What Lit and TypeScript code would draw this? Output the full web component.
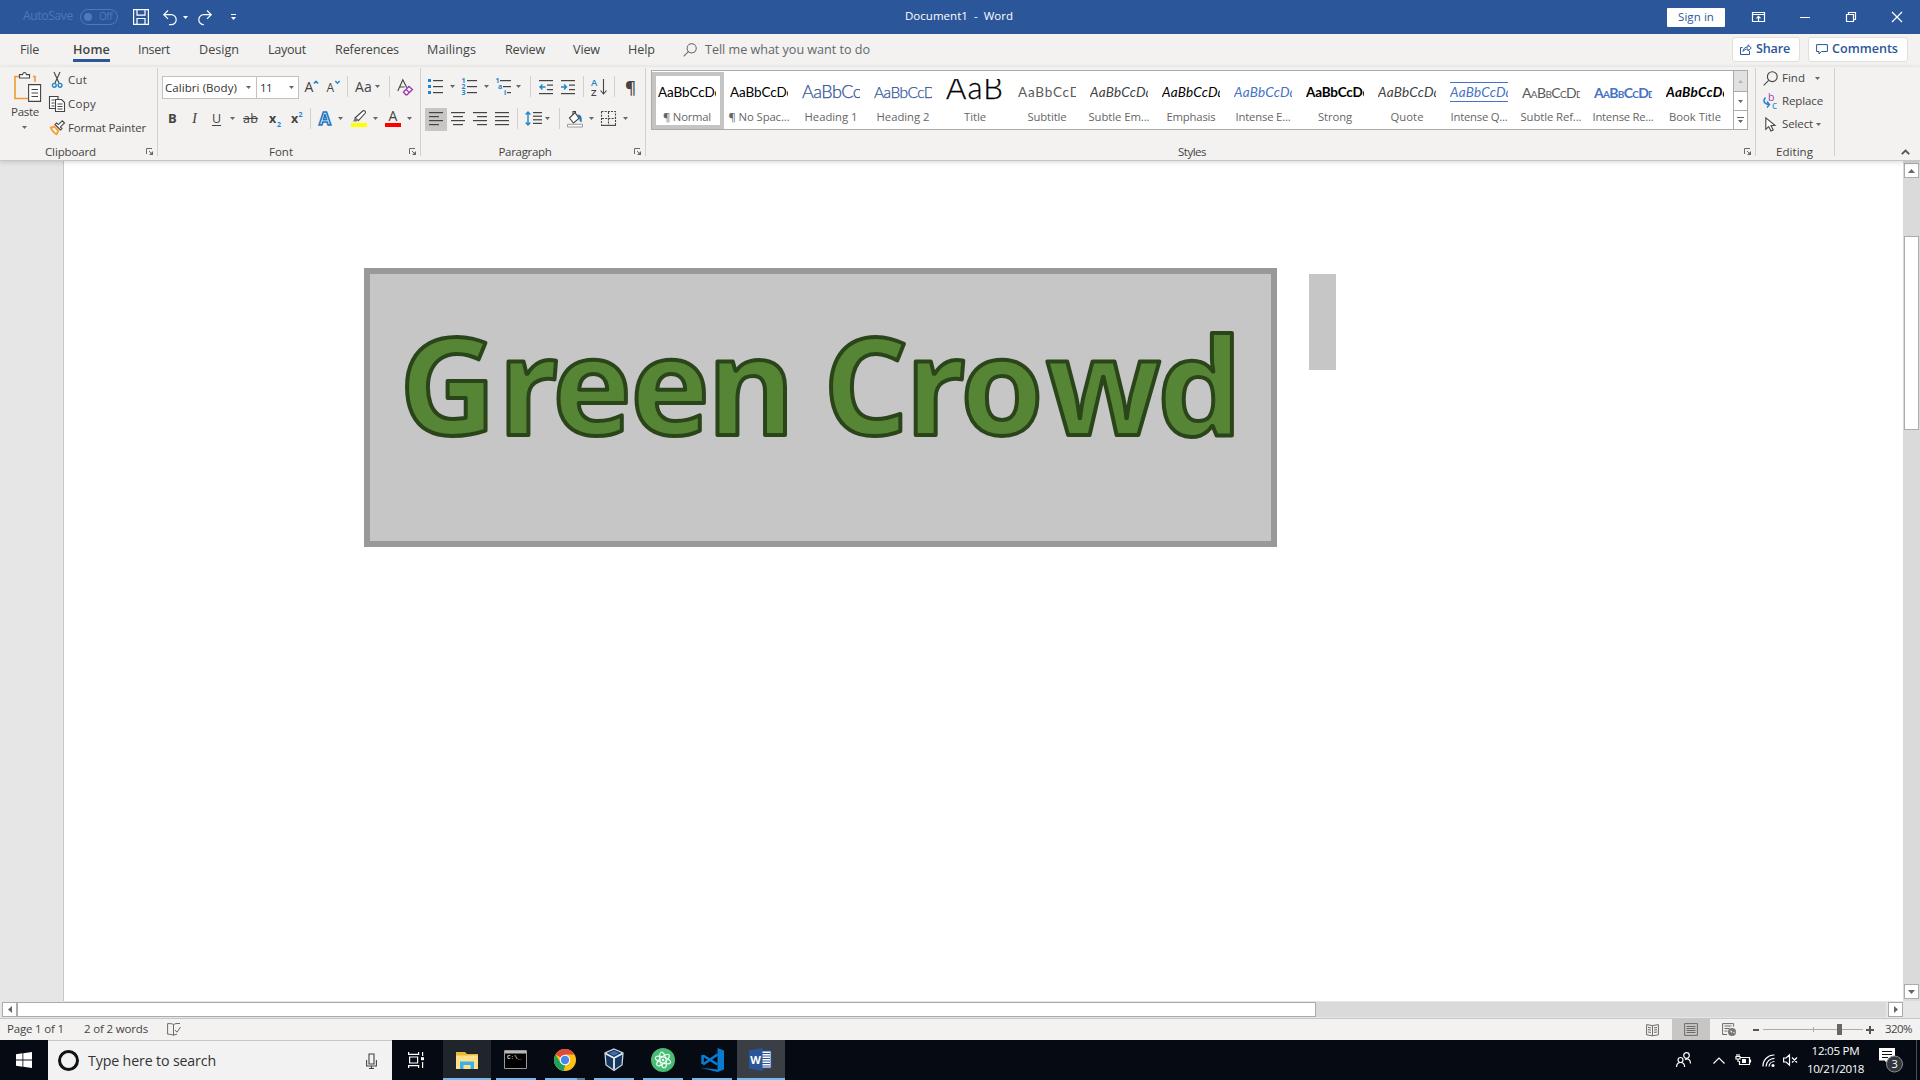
import { LitElement, html, svg, css, unsafeCSS, TemplateResult } from "lit";
import { customElement, property } from "lit/decorators.js";

/** Text that tracks its letters so that the run takes exactly `w` pixels. */
@customElement("fit-text")
class FitText extends LitElement {
  static styles = css`
    :host { display: block; flex: none; white-space: pre; line-height: 1.36; }
  `;
  @property({ type: Number }) w = 0;
  @property() text = "";
  render() {
    return html`<span>${this.text}</span>`;
  }
  firstUpdated() {
    const s = this.renderRoot.querySelector("span")!;
    const n = this.text.length;
    const natural = s.getBoundingClientRect().width;
    this.style.width = `${this.w}px`;
    if (n > 1) s.style.letterSpacing = `${(this.w - natural) / n}px`;
  }
}

const t = (text: string, w: number, cls = "") =>
  html`<fit-text class=${cls} .text=${text} .w=${w}></fit-text>`;
const ic = (w: number, h: number, body: TemplateResult | unknown, cls = "") =>
  html`<svg class="ic ${cls}" width=${w} height=${h} viewBox="0 0 ${w} ${h}">${body}</svg>`;
const arrow = (cls = "") => ic(5, 3, svg`<path class="fa" d="M0 0h5L2.5 3z"/>`, cls);
const sep = (cls = "") => html`<i class="vs ${cls}"></i>`;
const lines = (rows: number[][]) =>
  rows.map(([x, y, w]) => svg`<rect class="ln" x=${x} y=${y} width=${w} height="1.2"/>`);
const launcher = () =>
  ic(7, 7, svg`<path class="o7" d="M.5 6V.5H6M3 3l3 3"/><path class="f7" d="M7 3v4H3z"/>`, "launch");

const magnifier = (s: number, cls = "") =>
  html`<svg class="ic ${cls}" width=${s} height=${s} viewBox="0 0 15 15"><path class="o" d="M.7 14.3l5-5"/><circle class="o" cx="9.3" cy="5.7" r="4.9"/></svg>`;

const TABS: [string, number, string][] = [
  ["File", 19, "g20"], ["Home", 37, "g34 on"], ["Insert", 32, "g28"], ["Design", 40, "g29"],
  ["Layout", 38, "g29"], ["References", 64, "g29"], ["Mailings", 49, "g28"],
  ["Review", 40, "g29"], ["View", 27, "g28"], ["Help", 27, "g28"],
];

const STYLES: [string, number, string, number, string][] = [
  ["AaBbCcDd", 64, "¶ Normal", 48, "sel"],
  ["AaBbCcDd", 64, "¶ No Spac...", 61, ""],
  ["AaBbCcDd", 81, "Heading 1", 53, "h1"],
  ["AaBbCcDd", 69, "Heading 2", 53, "h2"],
  ["AaBb", 76, "Title", 22, "ti"],
  ["AaBbCcDd", 71, "Subtitle", 39, "gr"],
  ["AaBbCcDd", 63, "Subtle Em...", 61, "it dk"],
  ["AaBbCcDd", 63, "Emphasis", 49, "it"],
  ["AaBbCcDd", 63, "Intense E...", 55, "it bl"],
  ["AaBbCcDd", 64, "Strong", 34, "bo"],
  ["AaBbCcDd", 63, "Quote", 33, "it dk"],
  ["AaBbCcDd", 63, "Intense Q...", 57, "it bl iq"],
  ["AaBbCcDd", 61, "Subtle Ref...", 61, "sc gr"],
  ["AaBbCcDd", 61, "Intense Re...", 61, "sc bl bo"],
  ["AaBbCcDd", 64, "Book Title", 52, "bo it"],
];

const ICONS = {
  save: svg`<path class="ow" d="M.6.6h14.8v14.8H.6zM4 .6v5.6h8V.6M4 15v-5.500h8V15"/>`,
  undo: svg`<path class="ow" d="M5 .5L.8 4.700 5 8.900M1 4.700h7.200a5 5 0 0 1 0 10H6"/>`,
  redo: svg`<path class="ow" d="M9 .5l4.200 4.200L9 8.900M13 4.700H5.800a5 5 0 0 0 0 10"/>`,
  paste: svg`<path class="or" d="M5 4.500H1v22h13M19 4.500h2V10"/><path class="wo" d="M5.500 6V2.600h3C9 .9 10 .5 10.500.5s1.500.4 2 2.100h3V6z" stroke="#666"/><path class="wo" d="M14.600 12.600h12v16.800h-12z"/><path class="o" d="M17.500 17.500h6.500M17.500 21h6.500M17.500 24.500h6.500"/>`,
  cut: svg`<path class="o" d="M2 0l5 11M8 0L3 11"/><circle class="ob" cx="2.300" cy="13.300" r="1.900"/><circle class="ob" cx="8" cy="13.300" r="1.900"/>`,
  copy: svg`<path class="wo" d="M.5.5h8.500v12H.5z"/><path class="o" d="M2.500 4h3M2.500 7h3M2.500 10h3"/><path class="wo" d="M6.500 3.500h6l3 3v9h-9z"/><path class="o" d="M8.500 8h5M8.500 10.500h5M8.500 13h5"/>`,
  painter: svg`<path class="fo" d="M.5 7l5-1.500 5 5L8 15.500C5 14 2.500 12 .5 7z"/><path fill="#fff" d="M3 8.500l2.500-.5 2.500 3-1 2z"/><path class="wo" d="M6 4.500l5.500 5.500 1.500-1.500-1.600-1.600L15.500 3 13.300.8 9.300 4.600 7.600 3z"/>`,
  eraser: svg`<path class="o" d="M.8 12L5.800.8l4 8M2.600 8h5"/><path d="M6.500 13l5.500-5.500 3.400 3-5.400 5.200H8.800z" fill="#fff" stroke="#a03bb0" stroke-width="1.400"/><path d="M9 10.500l3.400 3" stroke="#a03bb0" stroke-width="1.400"/>`,
  hl: svg`<path class="wo" d="M4 8L12 .8c1.500-.6 3 .8 2.300 2.200L7.500 10.500z"/><path fill="#777" d="M4 7.500L2 11.500h3.500l2-1.500z"/><path d="M0 13h16v4H0z" fill="#ff0"/>`,
  dec: svg`${lines([[0, 0, 14], [8, 4.500, 6], [8, 9, 6], [0, 13, 14]])}<path class="ob" d="M6.500 7H1M3.500 4.500L1 7l2.500 2.500"/>`,
  inc: svg`${lines([[0, 0, 14], [8, 4.500, 6], [8, 9, 6], [0, 13, 14]])}<path class="ob" d="M0 7h5.500M3 4.500L5.500 7 3 9.500"/>`,
  borders: svg`<path class="o" stroke-dasharray="2 1.200" d="M.5.500h14V14M.500.500V14M7.500 1v13M1 7.500h14"/><path class="o" stroke-width="1.600" d="M0 14.400h15"/>`,
  shade: svg`<path class="wo" d="M2.500 7L8 1.500l4 6L6.500 12z"/><path class="o" d="M6 4V.5h2.500V3"/><path fill="#1e77b8" d="M10 3.500c4-.5 5.500 3 4.500 8-1.500-1-2.500-2-2-4z"/><path d="M.5 13.300h15v2.700H.5z" fill="#fff" stroke="#999"/>`,
  spacing: svg`${lines([[8, 1, 9], [8, 4.600, 9], [8, 8.200, 9], [8, 11.800, 9]])}<path class="ob" d="M3 1v13M.7 3.500L3 1l2.300 2.500M.7 11.500L3 14l2.300-2.500"/>`,
  share: svg`<path class="on" d="M2.500 4.500h-2v7h9V8M3 8.500c.3-3 2-4.500 5-4.500V1.800L11.300 5 8 8V6c-2.300 0-3.800.8-5 2.500z"/>`,
  comment: svg`<path class="on" d="M.6.6h10.800v6.900H5.500L3 10V7.500H.6z"/>`,
  select: svg`<path class="wo" d="M.8.800v11.500l2.900-2.700 2.200 4.400 2.300-1-2.200-4.300 4-.3z"/>`,
  pen: svg`<path class="o7" d="M6.500 1.500C5 .6 3 .5.6.6v10.600c2.400 0 4.400.2 5.900 1.200V1.500C7.500.8 9 .5 10 .5M6.500 12.400c1-.8 2-1 3.500-1.100M8 7l2 2.200L13.500 4M10 .5h3"/>`,
  read: svg`<path class="o7" d="M6.500 1.600L.6.600v10.200l5.900 1 5.900-1V.6zM6.500 1.600v10M2 3.500l3 .4M2 5.700l3 .4M2 8l3 .4M8 3.900l3-.4M8 6.100l3-.4M8 8.400l3-.4"/>`,
  print: svg`<path class="o7" d="M.6.6h12.800v11.800H.6zM2.500 3.500h9M2.500 5.500h9M2.500 7.500h9M2.500 9.500h9"/>`,
  web: svg`<path class="o7" d="M5 11.500H.6V.6h11v3M2.500 3h7M2.500 5.500h5M2.500 8h3"/><circle cx="10" cy="9" r="4" fill="#777"/><path d="M8 7.500l2 .5-.5 2zM11 9.500l1.500-1v2z" fill="#fff"/>`,
};

const WINDOWS = {
  start: svg`<path fill="#fff" d="M0 2.300L6.500 1.300V7.600H0zM7.300 1.200L16 0v7.600H7.300zM0 8.400h6.500v6.300L0 13.700zM7.300 8.400H16V16l-8.700-1.200z"/>`,
  taskview: svg`<path class="ow" d="M.6 0v2.400h10V0M.6 16v-2.400h10V16M1.600 5h8v6h-8zM14.600 0v4M14.600 10v6"/><path fill="#fff" d="M13 5.200h3v3h-3z"/>`,
  explorer: svg`<path fill="#e9b93a" d="M0 1h9l2 2h11v15H0z"/><path fill="#ffe08a" d="M0 4.500h22V18H0z"/><path fill="#3cb0ee" d="M4 10.500h14V18h-3.500v-4h-7v4H4z"/>`,
  cmd: svg`<path fill="#000" stroke="#999" d="M.5.500h22v18H.500z"/><path fill="#bbb" d="M1 1h21v2.500H1z"/><text class="cmdt" x="3" y="9">C:\\_</text>`,
  chrome: svg`<circle cx="11" cy="11" r="11" fill="#fbc116"/><path fill="#dd4b3e" d="M11 11L1.500 5.500A11 11 0 0 1 20.500 5.500H11z"/><path fill="#1da160" d="M1.500 5.500L6.500 13.800 11 16 9.800 22A11 11 0 0 1 1.500 5.500z"/><circle cx="11" cy="11" r="5.200" fill="#fff"/><circle cx="11" cy="11" r="4.200" fill="#4a86ee"/>`,
  vbox: svg`<path fill="#16365c" stroke="#c8d6e6" stroke-width="1.300" d="M10 1l9 4-1 12-8 5.500L2 17 1 5z"/><path fill="none" stroke="#e6eef7" stroke-width="1.800" d="M1.500 5.500L10 10l8.500-4.500M10 10v11.500"/><path fill="#3d6ea5" d="M5 5.200l5-2.400 5 2.400-5 2.600z"/>`,
  atom: svg`<circle cx="12" cy="12" r="12" fill="#48bb74"/><g fill="none" stroke="#e9fff1" stroke-width="1.100"><ellipse cx="12" cy="12" rx="3" ry="8" transform="rotate(-12 12 12)"/><ellipse cx="12" cy="12" rx="3" ry="8" transform="rotate(48 12 12)"/><ellipse cx="12" cy="12" rx="3" ry="8" transform="rotate(108 12 12)"/></g><circle cx="12" cy="12" r="1.300" fill="#fff"/>`,
  code: svg`<path fill="#0a7bd0" d="M17.500 0L24 2.500v19L17.500 24 0 19.800l17.500 1.700z"/><path fill="none" stroke="#0a7bd0" stroke-width="2.600" d="M17.500 6.500L3 16.500M17.500 16.500L3 7.500M2.600 7v9"/>`,
  word: svg`<path fill="#fff" stroke="#2b579a" d="M11 3h11v17H11z"/><path stroke="#2b579a" stroke-width="1.200" d="M13 5.500h8M13 8h8M13 10.500h8M13 13h8M13 15.500h8M13 18h8"/><path fill="#2a5699" d="M0 2.500L13.500 0v23L0 20.500z"/><text class="wt" x="1.200" y="15.500">W</text>`,
};

const TASKS: [keyof typeof WINDOWS, number, number, string][] = [
  ["explorer", 22, 18, "wide hov"], ["cmd", 23, 19, "g5"], ["chrome", 22, 22, "g9 multi"],
  ["vbox", 20, 23, "g9"], ["atom", 24, 24, "g9"], ["code", 24, 24, "g9"], ["word", 23, 23, "g5 wide act"],
];

const gaps = Array.from({ length: 60 }, (_, i) => `.g${i}{margin-left:${i}px}`).join("");

@customElement("app-root")
class AppRoot extends LitElement {
  static styles = [unsafeCSS(gaps), css`
    :host { display: block; width: 1920px; height: 1080px; overflow: hidden; font-family: "Open Sans", "Noto Sans", sans-serif; font-size: 11.5px; color: #444; background: #fff; }
    * { box-sizing: border-box; }
    .row { display: flex; align-items: center; }
    .ic { flex: none; display: block; overflow: visible; }
    .push { margin-left: auto; }
    .o { fill: none; stroke: #444; stroke-width: 1.1; }
    .o7 { fill: none; stroke: #6a6a6a; }
    .f7, .fa { fill: #666; }
    .ow { fill: none; stroke: #fff; stroke-width: 1.2; }
    .or { fill: none; stroke: #f09a2e; stroke-width: 1.6; }
    .ob { fill: none; stroke: #1e86cc; stroke-width: 1.4; }
    .on { fill: none; stroke: #2b579a; }
    .wo { fill: #fff; stroke: #444; stroke-width: 1.1; }
    .fo { fill: #f7a23b; }
    .ln { fill: #444; }
    .fb { fill: #1e86cc; }
    .st { font-size: 7px; font-weight: 700; fill: #1e86cc; }
    .vs { flex: none; width: 1px; height: 21px; background: #d2d0ce; }

    .title { height: 34px; background: #2b579a; color: #fff; }
    .title > fit-text, .gd, .status fit-text { margin-bottom: 2px; }
    .dim { color: #4f79b7; font-size: 12px; }
    .toggle { width: 38px; height: 16px; border: 1px solid #4f79b7; border-radius: 8px; display: flex; align-items: center; color: #4f79b7; font-size: 10px; }
    .toggle i { width: 8px; height: 8px; border-radius: 4px; background: #4f79b7; margin-left: 3px; margin-right: 7px; }
    .title .fa { fill: #fff; }
    .signin { width: 58px; height: 19px; background: #fff; color: #2b579a; display: flex; align-items: center; justify-content: center; border-radius: 1px; }
    .gd { margin-left: 669px; }
    .gs { margin-left: 654px; }

    .tabs { height: 33px; background: #f3f2f1; font-size: 12.6px; align-items: flex-start; }
    .tab { height: 28px; padding-top: 7px; line-height: 17px; }
    .on.tab { border-bottom: 3px solid #2b579a; font-weight: 600; }
    .btn { height: 25px; margin-top: 3px; background: #fff; border: 1px solid #e1dfdd; border-radius: 3px; color: #2b579a; font-weight: 600; display: flex; align-items: center; padding-left: 7px; padding-bottom: 1px; }
    .share { width: 68px; } .comm { width: 100px; margin-right: 12px; }
    .sic { margin-top: 9px; } .sic .o { stroke: #666; }
    .tell { color: #666; }

    .ribbon { height: 94px; background: #f3f2f1; border-bottom: 1px solid #c8c6c4; display: flex; position: relative; z-index: 1; box-shadow: 0 1px 5px rgba(0,0,0,.16); }
    .grp { display: grid; grid-template-rows: 76px 17px; border: 0; position: relative; }
    .grp::after { content: ""; position: absolute; right: 0; top: 1px; width: 1px; height: 88px; background: #d2d0ce; }
    .gl { display: flex; align-items: center; justify-content: center; }
    .launch { position: absolute; right: 5px; bottom: 5px; }
    .clip { width: 158px; } .font { width: 263px; } .para { width: 225px; } .sty { width: 1110px; } .edit { width: 79px; }
    .clip .gl, .font .gl, .para .gl { padding-right: 17px; } .sty .gl { padding-right: 18px; } .edit .gl { padding-right: 2px; }
    .cb { display: flex; }
    .paste { width: 49px; display: flex; flex-direction: column; align-items: center; padding-top: 5px; }
    .paste .ic:first-child { margin-left: 6px; }
    .paste fit-text { margin: 2px 0 6px 1px; }
    .c3 { padding-top: 1px; } .c3 .row { height: 24px; }
    .icell { width: 19px; flex: none; }
    .two { padding-top: 9px; display: grid; grid-template-rows: 23px 23px; row-gap: 9px; align-content: start; }
    .two .row { padding-bottom: 2px; }
    .box { height: 23px; margin-bottom: -2px; background: #fff; border: 1px solid #c1c1c1; display: flex; align-items: center; color: #333; }
    .bf { width: 95px; } .bs { width: 43px; margin-left: -1px; }
    .gly { font-size: 14px; }
    .b { font-weight: 700; font-size: 13px; }
    .ser { font-family: "Liberation Serif", serif; font-style: italic; font-size: 15px; }
    .und { text-decoration: underline; text-underline-offset: 2px; font-size: 12.5px; }
    .stk { text-decoration: line-through; font-size: 12.5px; }
    .tx { font-size: 14px; fill: #444; } .txs { font-size: 12px; } .az { font-size: 9.5px; font-weight: 600; }
    .txb { font-size: 12.5px; font-weight: 700; fill: #444; }
    .wa { font-size: 17px; font-weight: 700; fill: #fff; stroke: #1e77c2; stroke-width: 1.6; }
    .albg { width: 22px; height: 23px; margin-bottom: -2px; padding-bottom: 2px; background: #c8c6c4; display: flex; align-items: center; padding-left: 4px; }
    .pil { font-size: 17px; font-weight: 600; }

    .gal { margin: 3px 0 0 5px; width: 1097px; height: 60px; border: 1px solid #ababab; background: #fff; display: flex; }
    .cell { width: 72px; height: 58px; padding: 5px 8px 0 6px; flex: none; display: flex; flex-direction: column; align-items: center; }
    .cell.sel { box-shadow: inset 0 0 0 4px #c4c4c4; height: 57px; margin-top: 1px; padding-top: 4px; }
    .sm { width: 58px; height: 25px; overflow: hidden; font-family: Lato, "Open Sans", sans-serif; font-size: 13.5px; color: #000; display: flex; align-items: center; padding-top: 6px; margin-top: 1px; }
    .nm { color: #666; margin-top: 7px; height: 15px; display: flex; align-items: center; font-size: 11.3px; }
    .h1 .sm { font-size: 18px; color: #2f5496; padding-top: 4px; }
    .h2 .sm { font-size: 15.5px; color: #2f5496; }
    .h1 .sm, .h2 .sm { font-weight: 300; -webkit-text-stroke: .25px #2f5496; }
    .ti .sm { font-size: 31px; font-weight: 300; padding-top: 0; height: 23px; margin-top: 3px; align-items: flex-start; -webkit-text-stroke: .3px #000; }
    .ti .sm fit-text { line-height: 16px; }
    .gr .sm { color: #5a5a5a; } .dk .sm { color: #404040; } .bl .sm { color: #4472c4; }
    .it .sm { font-style: italic; } .bo .sm { font-weight: 700; }
    .sc .sm { font-variant: small-caps; font-size: 14px; }
    .iq .sm { border-top: 1px solid #4472c4; border-bottom: 1px solid #4472c4; height: 20px; margin-top: 6px; padding-top: 1px; }
    .gsb { width: 14px; margin-left: auto; border-left: 1px solid #ababab; display: grid; grid-template-rows: 21px 19px 18px; }
    .gsb div { display: grid; place-items: center; border-bottom: 1px solid #ababab; }
    .gsb div:first-child { background: #e1e1e1; } .gsb div:first-child .fa { fill: #b5b5b5; }
    .gsb div:last-child { border: 0; }
    .e3 .row { height: 23px; padding-left: 7px; padding-bottom: 1px; }
    .ecell { width: 19px; flex: none; }
    .coll { margin: 82px 10px 0 auto; }

    .work { height: 840px; display: grid; grid-template-columns: 64px 1839px 17px; background: #e6e6e6; }
    .gut { border-right: 1px solid #c6c6c6; }
    .page { background: #fff; display: flex; align-items: flex-start; padding: 107px 0 0 300px; }
    .shape { width: 913px; height: 279px; border: 6px solid #999; background: #c6c6c6; }
    .art { font-family: "Open Sans", "Noto Sans", sans-serif; font-weight: 700; font-size: 134px; fill: #568635; stroke: #2b451b; stroke-width: 4; stroke-linejoin: round; }
    .mark { width: 27px; height: 96px; background: #c6c6c6; margin: 6px 0 0 32px; }
    .vsb { padding: 2px 2px 2px 1px; display: flex; flex-direction: column; background: #dadada; }
    .sb { width: 15px; height: 15px; border: 1px solid #ababab; background: #fff; display: grid; place-items: center; flex: none; }
    .vth { width: 15px; height: 194px; border: 1px solid #ababab; background: #fff; margin-top: 58px; }
    .vsb .sb:last-child { margin-top: auto; }
    .hsb { height: 18px; background: #e6e6e6; border-bottom: 1px solid #c6c6c6; display: flex; padding: 1px 0 0 2px; }
    .hth { width: 1299px; height: 15px; border: 1px solid #ababab; background: #fff; }
    .htr { flex: 1; background: #dadada; height: 15px; }
    .hsb .sb:last-child { margin: 0 17px 0 2px; }

    .status { height: 21px; background: #f3f2f1; }
    .status .act { width: 38px; height: 21px; background: #c8c6c4; display: grid; place-items: center; }
    .pm { fill: #555; }
    .slider { width: 100px; height: 11px; display: flex; align-items: center; background: linear-gradient(#aaa, #aaa) 0 5px / 100% 1px no-repeat, linear-gradient(#aaa, #aaa) 50px 3px / 1px 5px no-repeat; }
    .slider i { width: 5px; height: 11px; background: #666; margin-left: 74px; }

    .bar { height: 40px; background: #060b13; color: #fff; display: flex; }
    .bar > * { flex: none; }
    .start { width: 48px; display: grid; place-items: center; }
    .search { width: 344px; background: #f2f2f2; border-top: 1px solid #c6c6c6; color: #333; font-size: 14.2px; padding-left: 10px; padding-right: 15px; }
    .ring { width: 21px; height: 21px; border: 3px solid #111; border-radius: 50%; }
    .tv { width: 51px; display: grid; align-items: center; padding-left: 16px; }
    .task { width: 40px; border-bottom: 2px solid #76b9ed; display: grid; place-items: center; padding: 1px 1px 0 0; }
    .wide { width: 48px; } .hov { background: #20252b; } .task.act { background: #3a3f46; }
    .multi { border-image: linear-gradient(90deg, #76b9ed 31px, #4f7ea6 31px) 2; }
    .cmdt { font: 700 6px "Liberation Mono", monospace; fill: #ddd; }
    .wt { font: 700 11px "Open Sans", sans-serif; fill: #fff; }
    .tray { margin-left: auto; display: flex; align-items: center; }
    .clock { width: 57px; display: flex; flex-direction: column; align-items: center; gap: 2px; font-size: 11.6px; } .clock fit-text { line-height: 16px; }
    .bdg { font-size: 11px; fill: #fff; }
    .edge { width: 1px; height: 40px; background: #4a4f57; margin-right: 3px; }
  `];

  titleBar() {
    return html`<div class="title row">
      ${t("AutoSave", 50, "dim g23")}
      <div class="toggle g7"><i></i>${t("Off", 13)}</div>
      ${ic(16, 16, ICONS.save, "g15")}${ic(14, 15, ICONS.undo, "g14")}${arrow("g6")}
      ${ic(14, 15, ICONS.redo, "g10")}
      ${ic(5, 6, svg`<path class="fa" d="M0 0h5v1H0zM0 3h5L2.500 6z"/>`, "g19")}
      <div class="gd">${t("Document1  -  Word", 108)}</div>
      <div class="signin gs g55x">${t("Sign in", 36)}</div>
      ${ic(13, 10, svg`<path class="ow" d="M.5.500h12v9H.500zM.500 2.500h12M6.500 9V4.500M4.500 6.300l2-2 2 2"/>`, "g27")}
      ${ic(10, 1, svg`<path fill="#fff" d="M0 0h10v1H0z"/>`, "g35")}
      ${ic(10, 10, svg`<path class="ow" stroke-width="1" d="M.500 2.500h7v7h-7zM2.500 2V.500h7v7H8"/>`, "g36")}
      ${ic(10, 10, svg`<path class="ow" d="M0 0l10 10M10 0L0 10"/>`, "g36")}
    </div>`;
  }

  tabBar() {
    return html`<div class="tabs row">
      ${TABS.map(([n, w, c]) => html`<div class="tab ${c}">${t(n, w)}</div>`)}
      ${magnifier(14, "g28 sic")}
      <div class="tab tell g8">${t("Tell me what you want to do", 165)}</div>
      <div class="btn share push">${ic(12, 12, ICONS.share)}${t("Share", 34, "g4")}</div>
      <div class="btn comm g8">${ic(12, 10, ICONS.comment)}${t("Comments", 66, "g4")}</div>
    </div>`;
  }

  clipboard() {
    return html`<div class="grp clip">
      <div class="cb">
        <div class="paste">${ic(27, 30, ICONS.paste)}${t("Paste", 28)}${arrow()}</div>
        <div class="c3">
          <div class="row"><div class="icell">${ic(10, 16, ICONS.cut, "g3")}</div>${t("Cut", 19)}</div>
          <div class="row"><div class="icell">${ic(16, 16, ICONS.copy)}</div>${t("Copy", 28)}</div>
          <div class="row"><div class="icell">${ic(16, 16, ICONS.painter)}</div>${t("Format Painter", 78)}</div>
        </div>
      </div>
      <div class="gl">${t("Clipboard", 51)}</div>${launcher()}
    </div>`;
  }

  font() {
    return html`<div class="grp font">
      <div class="two">
        <div class="row">
          <div class="box bf g4">${t("Calibri (Body)", 72, "g2")}${arrow("g9")}</div>
          <div class="box bs">${t("11", 12, "g3")}${arrow("g17")}</div>
          ${ic(13, 14, svg`<text class="tx" x="-.500" y="12">A</text><path class="ob" d="M8.800 3.500l2.200-2.200 2.200 2.200"/>`, "g6")}
          ${ic(13, 14, svg`<text class="tx txs" x="-.500" y="12">A</text><path class="ob" d="M8.300 1l2.200 2.200L12.700 1"/>`, "g9")}
          ${sep("g7")}${t("Aa", 17, "gly g7")}${arrow("g3")}${sep("g9")}
          ${ic(16, 16, ICONS.eraser, "g7")}
        </div>
        <div class="row">
          ${t("B", 8, "b g10")}${t("I", 7, "ser g16")}${t("U", 9, "und g13")}${arrow("g9")}
          ${t("ab", 15, "stk g8")}
          ${ic(13, 16, svg`<text class="txb" x="0" y="12">x</text><text class="st" x="8" y="16">2</text>`, "g11")}
          ${ic(12, 16, svg`<text class="txb" x="0" y="12">x</text><text class="st" x="7.500" y="6">2</text>`, "g9")}
          ${sep("g7")}
          ${ic(15, 16, svg`<text class="wa" x="1" y="14">A</text>`, "g7")}${arrow("g5")}
          ${ic(16, 17, ICONS.hl, "g8")}${arrow("g6")}
          ${ic(16, 17, svg`<text class="tx" x="3.500" y="10.500">A</text><path fill="#f00" d="M0 13h16v4H0z"/>`, "g7")}${arrow("g6")}
        </div>
      </div>
      <div class="gl">${t("Font", 24)}</div>${launcher()}
    </div>`;
  }

  paragraph() {
    const bullet = [0, 6, 12].map((y) => svg`<rect class="fb" x="0" y=${y} width="3" height="3"/>`);
    return html`<div class="grp para">
      <div class="two">
        <div class="row">
          ${ic(15, 15, svg`${bullet}${lines([[5, 1, 10], [5, 7, 10], [5, 13, 10]])}`, "g7")}${arrow("g7")}
          ${ic(15, 15, svg`<text class="st" x="-.500" y="4">1</text><text class="st" x="-.500" y="10">2</text><text class="st" x="-.500" y="16">3</text>${lines([[5, 1, 10], [5, 7, 10], [5, 13, 10]])}`, "g7")}${arrow("g7")}
          ${ic(15, 15, svg`<text class="st" x="-.500" y="4">1</text><text class="st" x="2" y="10">a</text><text class="st" x="8" y="16">i</text>${lines([[4, 1, 11], [7, 7, 8], [11, 13, 4]])}`, "g7")}${arrow("g5")}
          ${sep("g9")}${ic(14, 14, ICONS.dec, "g8")}${ic(14, 14, ICONS.inc, "g8")}${sep("g8")}
          ${ic(16, 16, svg`<text class="st az" x="0" y="7">A</text><text class="tx az" x="0" y="16.500">Z</text><path class="o" d="M12.500 0v15M9.500 11.500l3 3.500 3-3.500"/>`, "g7")}
          ${sep("g7")}${t("¶", 10, "pil g10")}
        </div>
        <div class="row">
          <div class="albg g4">${ic(14, 13, svg`${lines([[0, 0, 14], [0, 4, 10], [0, 8, 14], [0, 12, 10]])}`)}</div>
          ${ic(14, 13, svg`${lines([[0, 0, 14], [2, 4, 10], [0, 8, 14], [2, 12, 10]])}`, "g4")}
          ${ic(14, 13, svg`${lines([[0, 0, 14], [4, 4, 10], [0, 8, 14], [4, 12, 10]])}`, "g8")}
          ${ic(14, 13, svg`${lines([[0, 0, 14], [0, 4, 14], [0, 8, 14], [0, 12, 14]])}`, "g8")}
          ${sep("g8")}${ic(16, 15, ICONS.spacing, "g7")}${arrow("g4")}
          ${sep("g9")}${ic(16, 16, ICONS.shade, "g7")}${arrow("g6")}${ic(15, 15, ICONS.borders, "g7")}${arrow("g7")}
        </div>
      </div>
      <div class="gl">${t("Paragraph", 53)}</div>${launcher()}
    </div>`;
  }

  styleGallery() {
    return html`<div class="grp sty">
      <div class="gal">
        ${STYLES.map(([s, w, n, nw, c]) => html`<div class="cell ${c}">
          <div class="sm">${t(s, w)}</div><div class="nm">${t(n, nw)}</div></div>`)}
        <div class="gsb">
          <div>${ic(5, 3, svg`<path class="fa" d="M0 3h5L2.500 0z"/>`)}</div>
          <div>${arrow()}</div>
          <div>${ic(7, 7, svg`<path class="fa" d="M0 0h7v1H0zM1 3h5L3.500 6z"/>`)}</div>
        </div>
      </div>
      <div class="gl">${t("Styles", 28)}</div>${launcher()}
    </div>`;
  }

  editing() {
    return html`<div class="grp edit">
      <div class="e3">
        <div class="row"><div class="ecell">${magnifier(15)}</div>${t("Find", 23)}${arrow("g10")}</div>
        <div class="row"><div class="ecell">${ic(15, 16, svg`<text x="5" y="8" font-size="10.500" fill="#a03bb0">b</text><text x="9" y="16" font-size="10.500" fill="#1e86cc">c</text><path class="ob" d="M2.500 4.500C-.5 8 1 11 6 11.500M4 8.500l2.500 3L4 14.500"/>`)}</div>${t("Replace", 41)}</div>
        <div class="row"><div class="ecell">${ic(12, 15, ICONS.select, "g2")}</div>${t("Select", 31)}${arrow("g3")}</div>
      </div>
      <div class="gl">${t("Editing", 37)}</div>
    </div>`;
  }

  doc() {
    return html`<div class="work">
        <div class="gut"></div>
        <div class="page">
          <div class="shape"><svg class="ic" width="901" height="267" viewBox="0 0 901 267">
            <text class="art" x="29.2 128 182.4 260.4 337 415 453.2 535.2 590.4 676 787.500" y="161">Green Crowd</text>
          </svg></div>
          <div class="mark"></div>
        </div>
        <div class="vsb">
          <div class="sb">${ic(7, 4, svg`<path class="fa" d="M0 4h7L3.500 0z"/>`)}</div>
          <div class="vth"></div>
          <div class="sb">${ic(7, 4, svg`<path class="fa" d="M0 0h7L3.500 4z"/>`)}</div>
        </div>
      </div>
      <div class="hsb">
        <div class="sb">${ic(4, 7, svg`<path class="fa" d="M4 0v7L0 3.500z"/>`)}</div>
        <div class="hth"></div><div class="htr"></div>
        <div class="sb">${ic(4, 7, svg`<path class="fa" d="M0 0v7l4-3.500z"/>`)}</div>
      </div>`;
  }

  status() {
    return html`<div class="status row">
      ${t("Page 1 of 1", 57, "g7")}${t("2 of 2 words", 64, "g20")}${ic(14, 13, ICONS.pen, "g19")}
      <div class="push row">
        ${ic(13, 12, ICONS.read)}<div class="act g13">${ic(14, 13, ICONS.print)}</div>
        ${ic(14, 13, ICONS.web, "g12")}
        ${ic(6, 2, svg`<path class="pm" d="M0 0h6v2H0z"/>`, "g17")}
        <div class="slider g4"><i></i></div>
        ${ic(8, 8, svg`<path class="pm" d="M0 3h8v2H0zM3 0h2v8H3z"/>`, "g3")}
        ${t("320%", 27, "g11")}<i class="g8"></i>
      </div>
    </div>`;
  }

  taskbar() {
    return html`<div class="bar">
      <div class="start">${ic(16, 16, WINDOWS.start)}</div>
      <div class="search row"><div class="ring"></div>${t("Type here to search", 128, "g9")}
        ${ic(11, 16, svg`<path class="o" d="M3 1h5v10H3zM.6 7v6h9.800V7M5.500 13v3M3 15.500h5"/>`, "push")}</div>
      <div class="tv">${ic(16, 16, WINDOWS.taskview)}</div>
      ${TASKS.map(([k, w, h, c]) => html`<div class="task ${c}">${ic(w, h, WINDOWS[k])}</div>`)}
      <div class="tray">
        ${ic(15, 16, svg`<g class="ow"><circle cx="10.500" cy="3.500" r="2.800"/><circle cx="4.500" cy="8" r="2.500"/><path d="M.6 15c0-6 8-6 8 0M9 7.500c3-1.500 5.500 0 5.500 4"/></g>`)}
        ${ic(12, 7, svg`<path class="ow" stroke-width="1.500" d="M.5 6.500L6 1l5.500 5.500"/>`, "g22")}
        ${ic(16, 12, svg`<path class="ow" d="M5.500 3.500h9v7H4.500V7M15.500 5.500v3M1 2.500v2.500h4V2.500zM2 0v2.500M4 0v2.500M3 5v3"/><path fill="#fff" d="M7 5h4v4H7z"/>`, "g10")}
        ${ic(13, 13, svg`<path class="ow" d="M1 12.500A11 11 0 0 1 12.500 1M4 12.500A8.500 8.500 0 0 1 12.500 4.300M7 12.500A5.500 5.500 0 0 1 12.500 7.500"/><circle cx="11" cy="11.500" r="1.500" fill="#fff"/>`, "g11")}
        ${ic(14, 12, svg`<path class="ow" d="M.6 4h2.500L6.500.8v10.400L3.100 8H.6zM9 3.500l5 5M14 3.500l-5 5"/>`, "g8")}
        <div class="clock g10">${t("12:05 PM", 48)}${t("10/21/2018", 57)}</div>
        ${ic(25, 24, svg`<path fill="#fff" d="M0 0h16v12.500H9V16l-3.500-3.500H0z"/><path stroke="#111" d="M3 3.500h10M3 6.500h10M3 9.500h6"/><circle cx="15.500" cy="16" r="8" fill="#33373d" stroke="#8a8d91"/><text class="bdg" x="12.500" y="20">3</text>`, "g15")}
        <div class="edge g12"></div>
      </div>
    </div>`;
  }

  render() {
    return html`${this.titleBar()}${this.tabBar()}
      <div class="ribbon">
        ${this.clipboard()}${this.font()}${this.paragraph()}${this.styleGallery()}${this.editing()}
        ${ic(9, 6, svg`<path d="M.8 5.200L4.500 1.500l3.700 3.700" fill="none" stroke="#555" stroke-width="1.800"/>`, "coll")}
      </div>
      ${this.doc()}${this.status()}${this.taskbar()}`;
  }
}
